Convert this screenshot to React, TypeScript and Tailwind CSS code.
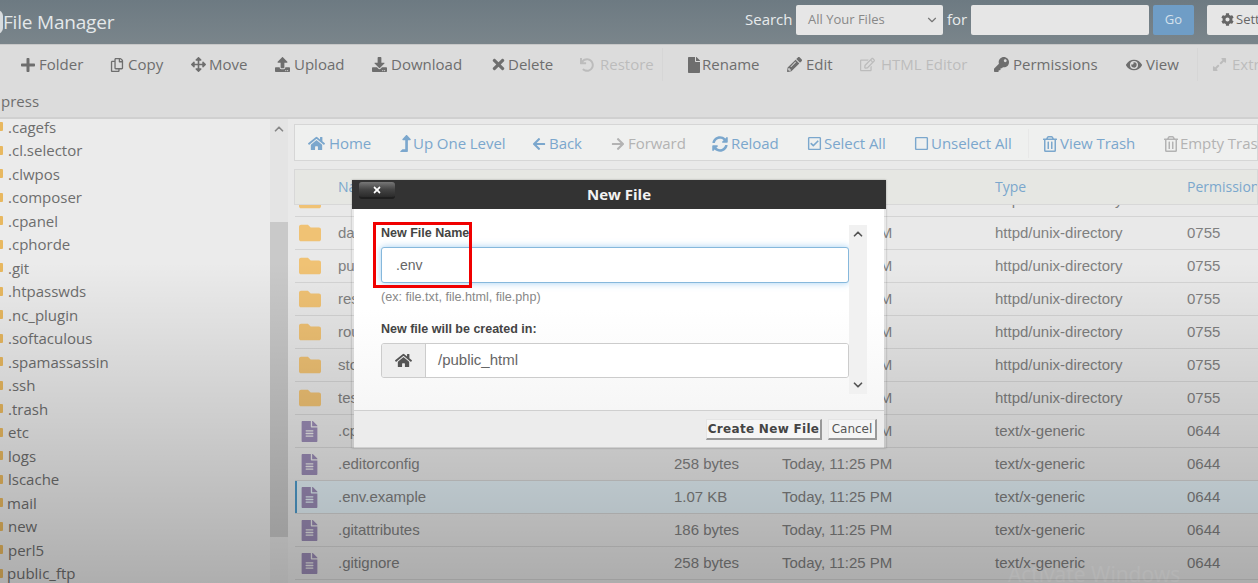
import React from "react";
import {
  FaPlus, FaRegCopy, FaArrowsAlt, FaUpload, FaDownload, FaTimes, FaUndo, FaFile, FaPencilAlt, FaRegEdit, FaKey, FaEye,
  FaExpandAlt, FaHome, FaLevelUpAlt, FaArrowLeft, FaArrowRight, FaSyncAlt, FaRegCheckSquare, FaRegSquare, FaRegTrashAlt, FaCog, FaFolder, FaFileAlt,
} from "react-icons/fa";
import { ChevronDown, ChevronUp } from "lucide-react";

const tools = [
  { w: "w-[90px]", b: "w-[19px]", s: 16, Icon: FaPlus, t: "Folder" },
  { w: "w-[81px]", b: "w-[18px]", s: 14, Icon: FaRegCopy, t: "Copy" },
  { w: "w-[84px]", b: "w-[18px]", s: 15, Icon: FaArrowsAlt, t: "Move" },
  { w: "w-[97px]", b: "w-[19px]", s: 15, Icon: FaUpload, t: "Upload" },
  { w: "w-[118px]", b: "w-[19px]", s: 15, Icon: FaDownload, t: "Download" },
  { w: "w-[90px]", b: "w-[18px]", s: 17, Icon: FaTimes, t: "Delete" },
  { w: "w-[82px]", b: "w-[20px]", s: 14, Icon: FaUndo, t: "Restore", off: true, sep: "w-[24px]" },
  { w: "w-[101px]", b: "w-[16px]", s: 16, Icon: FaFile, t: "Rename" },
  { w: "w-[73px]", b: "w-[19px]", s: 15, Icon: FaPencilAlt, t: "Edit" },
  { w: "w-[134px]", b: "w-[21px]", s: 15, Icon: FaRegEdit, t: "HTML Editor", off: true },
  { w: "w-[132px]", b: "w-[19px]", s: 15, Icon: FaKey, t: "Permissions" },
  { w: "w-[71px]", b: "w-[20px]", s: 16, Icon: FaEye, t: "View", sep: "w-[15px]" },
  { w: "w-[80px]", b: "w-[20px]", s: 15, Icon: FaExpandAlt, t: "Extract", off: true },
];

const nav = [
  { w: "w-[91px]", b: "w-[21px]", s: 17, Icon: FaHome, t: "Home" },
  { w: "w-[133px]", b: "w-[14px] -ml-[2px] mr-[2px]", s: 17, Icon: FaLevelUpAlt, t: "Up One Level" },
  { w: "w-[79px]", b: "w-[17px]", s: 14, Icon: FaArrowLeft, t: "Back" },
  { w: "w-[101px]", b: "w-[17px]", s: 14, Icon: FaArrowRight, t: "Forward", off: true },
  { w: "w-[95px]", b: "w-[19px]", s: 16, Icon: FaSyncAlt, t: "Reload" },
  { w: "w-[107px]", b: "w-[17px]", s: 15, Icon: FaRegCheckSquare, t: "Select All" },
  { w: "w-[114px]", b: "w-[17px]", s: 15, Icon: FaRegSquare, t: "Unselect All", sep: "w-[14px]" },
  { w: "w-[121px]", b: "w-[18px]", s: 16, Icon: FaRegTrashAlt, t: "View Trash" },
  { w: "w-[120px]", b: "w-[17px]", s: 16, Icon: FaRegTrashAlt, t: "Empty Trash", off: true },
];

const tree = [
  ".cagefs", ".cl.selector", ".clwpos", ".composer", ".cpanel", ".cphorde", ".git", ".htpasswds", ".nc_plugin", ".softaculous",
  ".spamassassin", ".ssh", ".trash", "etc", "logs", "lscache", "mail", "new", "perl5", "public_ftp",
];

const folderRows = ["bootstrap", "database", "public", "resources", "routes", "storage", "tests"];
const fileRows = [
  { n: ".cpanel.yml", s: "258 bytes" },
  { n: ".editorconfig", s: "258 bytes" },
  { n: ".env.example", s: "1.07 KB", sel: true },
  { n: ".gitattributes", s: "186 bytes" },
  { n: ".gitignore", s: "258 bytes" },
];

const rowGrid = "grid grid-cols-[43px_336px_108px_213px_192px_1fr] items-center h-[33px] border-b border-[#d4d4d4] text-[15px] text-[#808080] whitespace-nowrap overflow-hidden";

export default function App() {
  return (
    <div className="relative w-[1258px] h-[583px] overflow-hidden bg-[#e9e9e9] font-['Open_Sans',sans-serif]">
      {/* Header */}
      <header className="h-[45px] flex items-center bg-gradient-to-b from-[#6d7a82] to-[#7a858b] border-b border-[#c8c8c8]">
        <span className="pl-[3px] text-[19px] text-[#e4e8ea] -tracking-[0.2px]">File Manager</span>
        <div className="ml-auto flex items-center h-full w-[513px] shrink-0 -mt-[5px]">
          <span className="shrink-0 text-[15px] text-[#e8ebec] w-[51px]">Search</span>
          <div className="shrink-0 w-[147px] h-[30px] bg-[#e6e6e6] rounded-[2px] flex items-center justify-between pl-3 pr-[4px] text-[13px] text-[#888888]">
            All Your Files
            <ChevronDown size={14} strokeWidth={2} className="text-[#777777]" />
          </div>
          <span className="shrink-0 text-[15px] text-[#e8ebec] ml-[4px] w-[24px]">for</span>
          <div className="shrink-0 w-[178px] h-[30px] bg-[#e6e6e6] rounded-[2px]" />
          <div className="shrink-0 ml-[4px] w-[41px] h-[30px] bg-[#6f9dc6] rounded-[2px] flex items-center justify-center text-[13px] text-[#d5e1ec]">Go</div>
          <div className="shrink-0 ml-[13px] h-[30px] w-[60px] overflow-hidden bg-[#e6e6e6] rounded-l-[2px] flex items-center pl-[14px] gap-[2px] text-[13px] text-[#666666]">
            <FaCog size={13} className="shrink-0" />
            <span>Settings</span>
          </div>
        </div>
      </header>

      {/* Action toolbar */}
      <div className="h-[74px] bg-[#dcdcdc] border-b-2 border-[#d0d0d0] overflow-hidden">
        <div className="flex pl-[20px] h-[39px] w-[1400px]">
          {tools.map(({ w, b, s, Icon, t, off, sep }) => (
            <React.Fragment key={t}>
              <div className={`${w} shrink-0 flex items-center text-[15px] ${off ? "text-[#bcbcbc]" : "text-[#6e6e6e]"}`}>
                <span className={`${b} shrink-0`}><Icon size={s} /></span>
                <span>{t}</span>
              </div>
              {sep && <div className={`${sep} shrink-0 border-l border-[#d6d6d6] my-[3px]`} />}
            </React.Fragment>
          ))}
        </div>
        <div className="h-[33px] flex items-center pt-[1px] pl-[1px] text-[15px] text-[#6e6e6e]">press</div>
      </div>

      <div className="flex h-[464px]">
        {/* Tree */}
        <aside className="w-[270px] overflow-hidden bg-[#ebebeb]">
          <div className="-mt-[4px]">
            {tree.map((n) => (
              <div key={n} className="h-[23.5px] flex items-center gap-[5px] text-[15px] text-[#6e6e6e] whitespace-nowrap">
                <span className="w-[3px] h-[9px] bg-[#e8b860] rounded-r-[1px]" />
                <span className={n === "mail" || n === "public_ftp" ? "-ml-[1px]" : ""}>{n}</span>
              </div>
            ))}
          </div>
        </aside>
        {/* Tree scrollbar */}
        <div className="w-[18px] bg-[#e4e4e4] flex flex-col">
          <div className="h-[103px] flex justify-center pt-[3px]">
            <ChevronUp size={14} strokeWidth={3} className="text-[#888888]" />
          </div>
          <div className="h-[315px] bg-[#c9c9c9]" />
        </div>

        {/* Main */}
        <main className="ml-[6px] flex-1 pt-[5px] overflow-hidden">
          <nav className="h-[37px] bg-[#eff0ef] border border-[#d6d6d6] flex items-center pl-[13px] pt-[2px] whitespace-nowrap">
            {nav.map(({ w, b, s, Icon, t, off, sep }) => (
              <React.Fragment key={t}>
                <div className={`${w} shrink-0 flex items-center text-[15px] -tracking-[0.05px] ${off ? "text-[#b3b3b3]" : "text-[#7ba7cd]"}`}>
                  <span className={`${b} shrink-0`}><Icon size={s} /></span>
                  <span>{t}</span>
                </div>
                {sep && <div className={`${sep} shrink-0 self-stretch border-l border-[#e8e8e8] my-[2px]`} />}
              </React.Fragment>
            ))}
          </nav>
          <div className="mt-[8px] h-[36px] pb-[2px] bg-[#e6e7e3] border border-[#d8d8d8] grid grid-cols-[43px_336px_108px_213px_192px_1fr] items-center text-[14px] text-[#7ba7cd] whitespace-nowrap overflow-hidden">
            <span />
            <span>Name</span>
            <span>Size</span>
            <span>Last Modified</span>
            <span>Type</span>
            <span>Permission</span>
          </div>
          <div className="h-[378px] overflow-hidden font-['Liberation_Sans',sans-serif] bg-[#e9e9e9]">
            <div className="-mt-[21px] pl-[1px]">
              {folderRows.map((n) => (
                <div key={n} className={rowGrid}>
                  <FaFolder size={22} className="ml-[4px] text-[#f0c274]" />
                  <span>{n}</span>
                  <span />
                  <span>Today, 11:25 PM</span>
                  <span>httpd/unix-directory</span>
                  <span>0755</span>
                </div>
              ))}
              {fileRows.map((r) => (
                <div key={r.n} className={`${rowGrid} ${r.sel ? "bg-[#e3f0f6] shadow-[inset_2px_0_0_#4f9bcb]" : ""}`}>
                  <FaFileAlt size={21} className="ml-[4px] text-[#9a8bb5]" />
                  <span>{r.n}</span>
                  <span>{r.s}</span>
                  <span>Today, 11:25 PM</span>
                  <span>text/x-generic</span>
                  <span>0644</span>
                </div>
              ))}
            </div>
          </div>
        </main>
      </div>

      {/* Backdrop dimming */}
      <div className="absolute inset-0 pointer-events-none bg-[linear-gradient(to_bottom,transparent_45%,rgba(0,0,0,0.26)_100%)]" />
      <div className="absolute left-[-9px] top-[10px] w-[12px] h-[24px] rounded-full bg-[#d8dcde]" />
      <div className="absolute left-[1008px] top-[559px] text-[21px] text-white/[0.07] whitespace-nowrap">Activate Windows</div>

      {/* Modal */}
      <div className="absolute left-[352px] top-[180px] w-[534px] h-[268px] flex flex-col font-['Liberation_Sans',sans-serif] shadow-[0_0_2px_rgba(0,0,0,0.3)]">
        <div className="relative h-[29px] bg-[#333333] flex items-center justify-center text-[15px] font-bold text-[#f2f2f2] font-['Open_Sans',sans-serif]">
          New File
          <div className="absolute left-[7px] top-[2px] w-[36px] h-[17px] rounded-[3px] bg-gradient-to-b from-[#777777] via-[#444444] to-[#2b2b2b] border-b-2 border-[#1f1f1f] flex items-center justify-center">
            <FaTimes size={10} className="text-white" />
          </div>
        </div>
        <div className="h-[202px] mx-[2px] bg-gradient-to-b from-white via-white to-[#f6f6f6] flex pl-[27px] pt-[16px] pr-[17px] border-b border-[#cfcfcf]">
          <div className="w-[468px]">
            <div className="h-[16px] text-[12.5px] leading-[16px] font-bold text-[#444444]">New File Name</div>
            <div className="mt-[6px] h-[36px] border border-[#86b8dc] rounded-[3px] bg-white shadow-[0_0_7px_rgba(102,175,233,0.6)] flex items-center pl-[14px] text-[14px] text-[#666666]">.env</div>
            <div className="mt-[7px] text-[12.6px] leading-[14px] text-[#888888]">(ex: file.txt, file.html, file.php)</div>
            <div className="mt-[17px] h-[16px] text-[12.5px] leading-[16px] font-bold text-[#444444]">New file will be created in:</div>
            <div className="mt-[6px] h-[35px] border border-[#cccccc] rounded-[3px] flex text-[15px] text-[#666666] overflow-hidden">
              <div className="w-[44px] bg-[#eeeeee] border-r border-[#cccccc] flex items-center justify-center text-[#555555]">
                <FaHome size={17} />
              </div>
              <div className="flex-1 bg-white flex items-center pl-[12px] pb-[1px]">/public_html</div>
            </div>
          </div>
          <div className="w-[18px] h-[169px] bg-[#f1f1f1] flex flex-col items-center justify-between py-[2px]">
            <ChevronUp size={14} strokeWidth={3} className="text-[#555555]" />
            <ChevronDown size={14} strokeWidth={3} className="text-[#555555]" />
          </div>
        </div>
        <div className="h-[37px] mx-[2px] bg-[#ececec] flex items-center justify-end gap-[6px] pr-[7px] border-b border-[#cfcfcf]">
          <div className="w-[116px] h-[21px] bg-[#f5f5f5] border border-[#e4e4e4] border-b-2 border-r-2 border-b-[#999999] border-r-[#999999] flex items-center justify-center font-bold tracking-[0.3px] text-[#444444] font-['DejaVu_Sans',sans-serif] whitespace-nowrap">
            <span className="text-[12px]">Create New File</span>
          </div>
          <div className="w-[49px] h-[21px] bg-[#f5f5f5] border border-[#e4e4e4] border-b-2 border-r-2 border-b-[#999999] border-r-[#999999] flex items-center justify-center text-[12px] text-[#555555] font-['DejaVu_Sans',sans-serif]">Cancel</div>
        </div>
      </div>

      {/* Red annotation box */}
      <div className="absolute left-[373px] top-[222px] w-[99px] h-[66px] border-[3px] border-[#f00000]" />
    </div>
  );
}
